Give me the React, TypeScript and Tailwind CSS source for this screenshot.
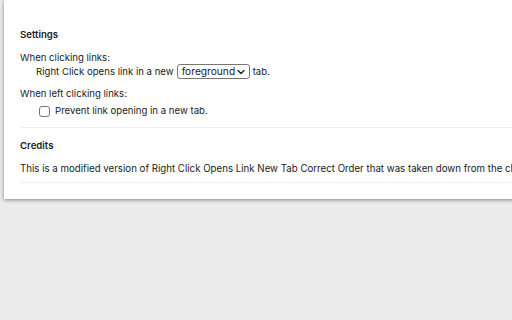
import React from 'react'

export default function App() {
  return (
    <div
      className="w-[512px] h-[320px] overflow-hidden bg-[#ececec] text-[#202124]"
      style={{ fontFamily: 'Inter, "Liberation Sans", sans-serif' }}
    >
      <div className="ml-[4px] w-[600px] h-[199px] bg-white shadow-[0_1px_4px_rgba(0,0,0,0.45)] pl-[16px] pt-[27px]">
        <div className="text-[9.6px] font-semibold leading-[16px]">Settings</div>

        <div className="mt-[8px] text-[9.6px] leading-[14px]">When clicking links:</div>
        <div className="flex items-center pl-[16px] h-[13px] text-[9.6px] leading-[13px]">
          <span>Right Click opens link in a new</span>
          <div className="ml-[3px] mr-[3px] flex items-center justify-between w-[73px] h-[15px] border border-[#767676] rounded-[3px] pl-[4px] pr-[4px] text-[10.2px]">
            <span className="leading-[13px]">foreground</span>
            <svg width="8" height="6" viewBox="0 0 8 6">
              <path d="M1 1.5 L4 4.5 L7 1.5" fill="none" stroke="#202124" strokeWidth="1.4" strokeLinecap="round" strokeLinejoin="round" />
            </svg>
          </div>
          <span>tab.</span>
        </div>

        <div className="mt-[9px] text-[9.6px] leading-[14px]">When left clicking links:</div>
        <div className="flex items-center pl-[19px] mt-[3px] text-[9.6px] leading-[14px]">
          <span className="w-[11px] h-[11px] border border-[#767676] rounded-[3px] bg-white" />
          <span className="ml-[5px]">Prevent link opening in a new tab.</span>
        </div>

        <div className="mt-[9px] h-px bg-[#eeeeee]" />

        <div className="mt-[10px] text-[9.6px] font-semibold leading-[16px]">Credits</div>
        <div className="mt-[8px] text-[9.7px] leading-[14px] whitespace-nowrap">
          This is a modified version of Right Click Opens Link New Tab Correct Order that was taken down from the chrome web store.
        </div>
        <div className="mt-[6px] h-px bg-[#eeeeee]" />
      </div>
    </div>
  )
}
